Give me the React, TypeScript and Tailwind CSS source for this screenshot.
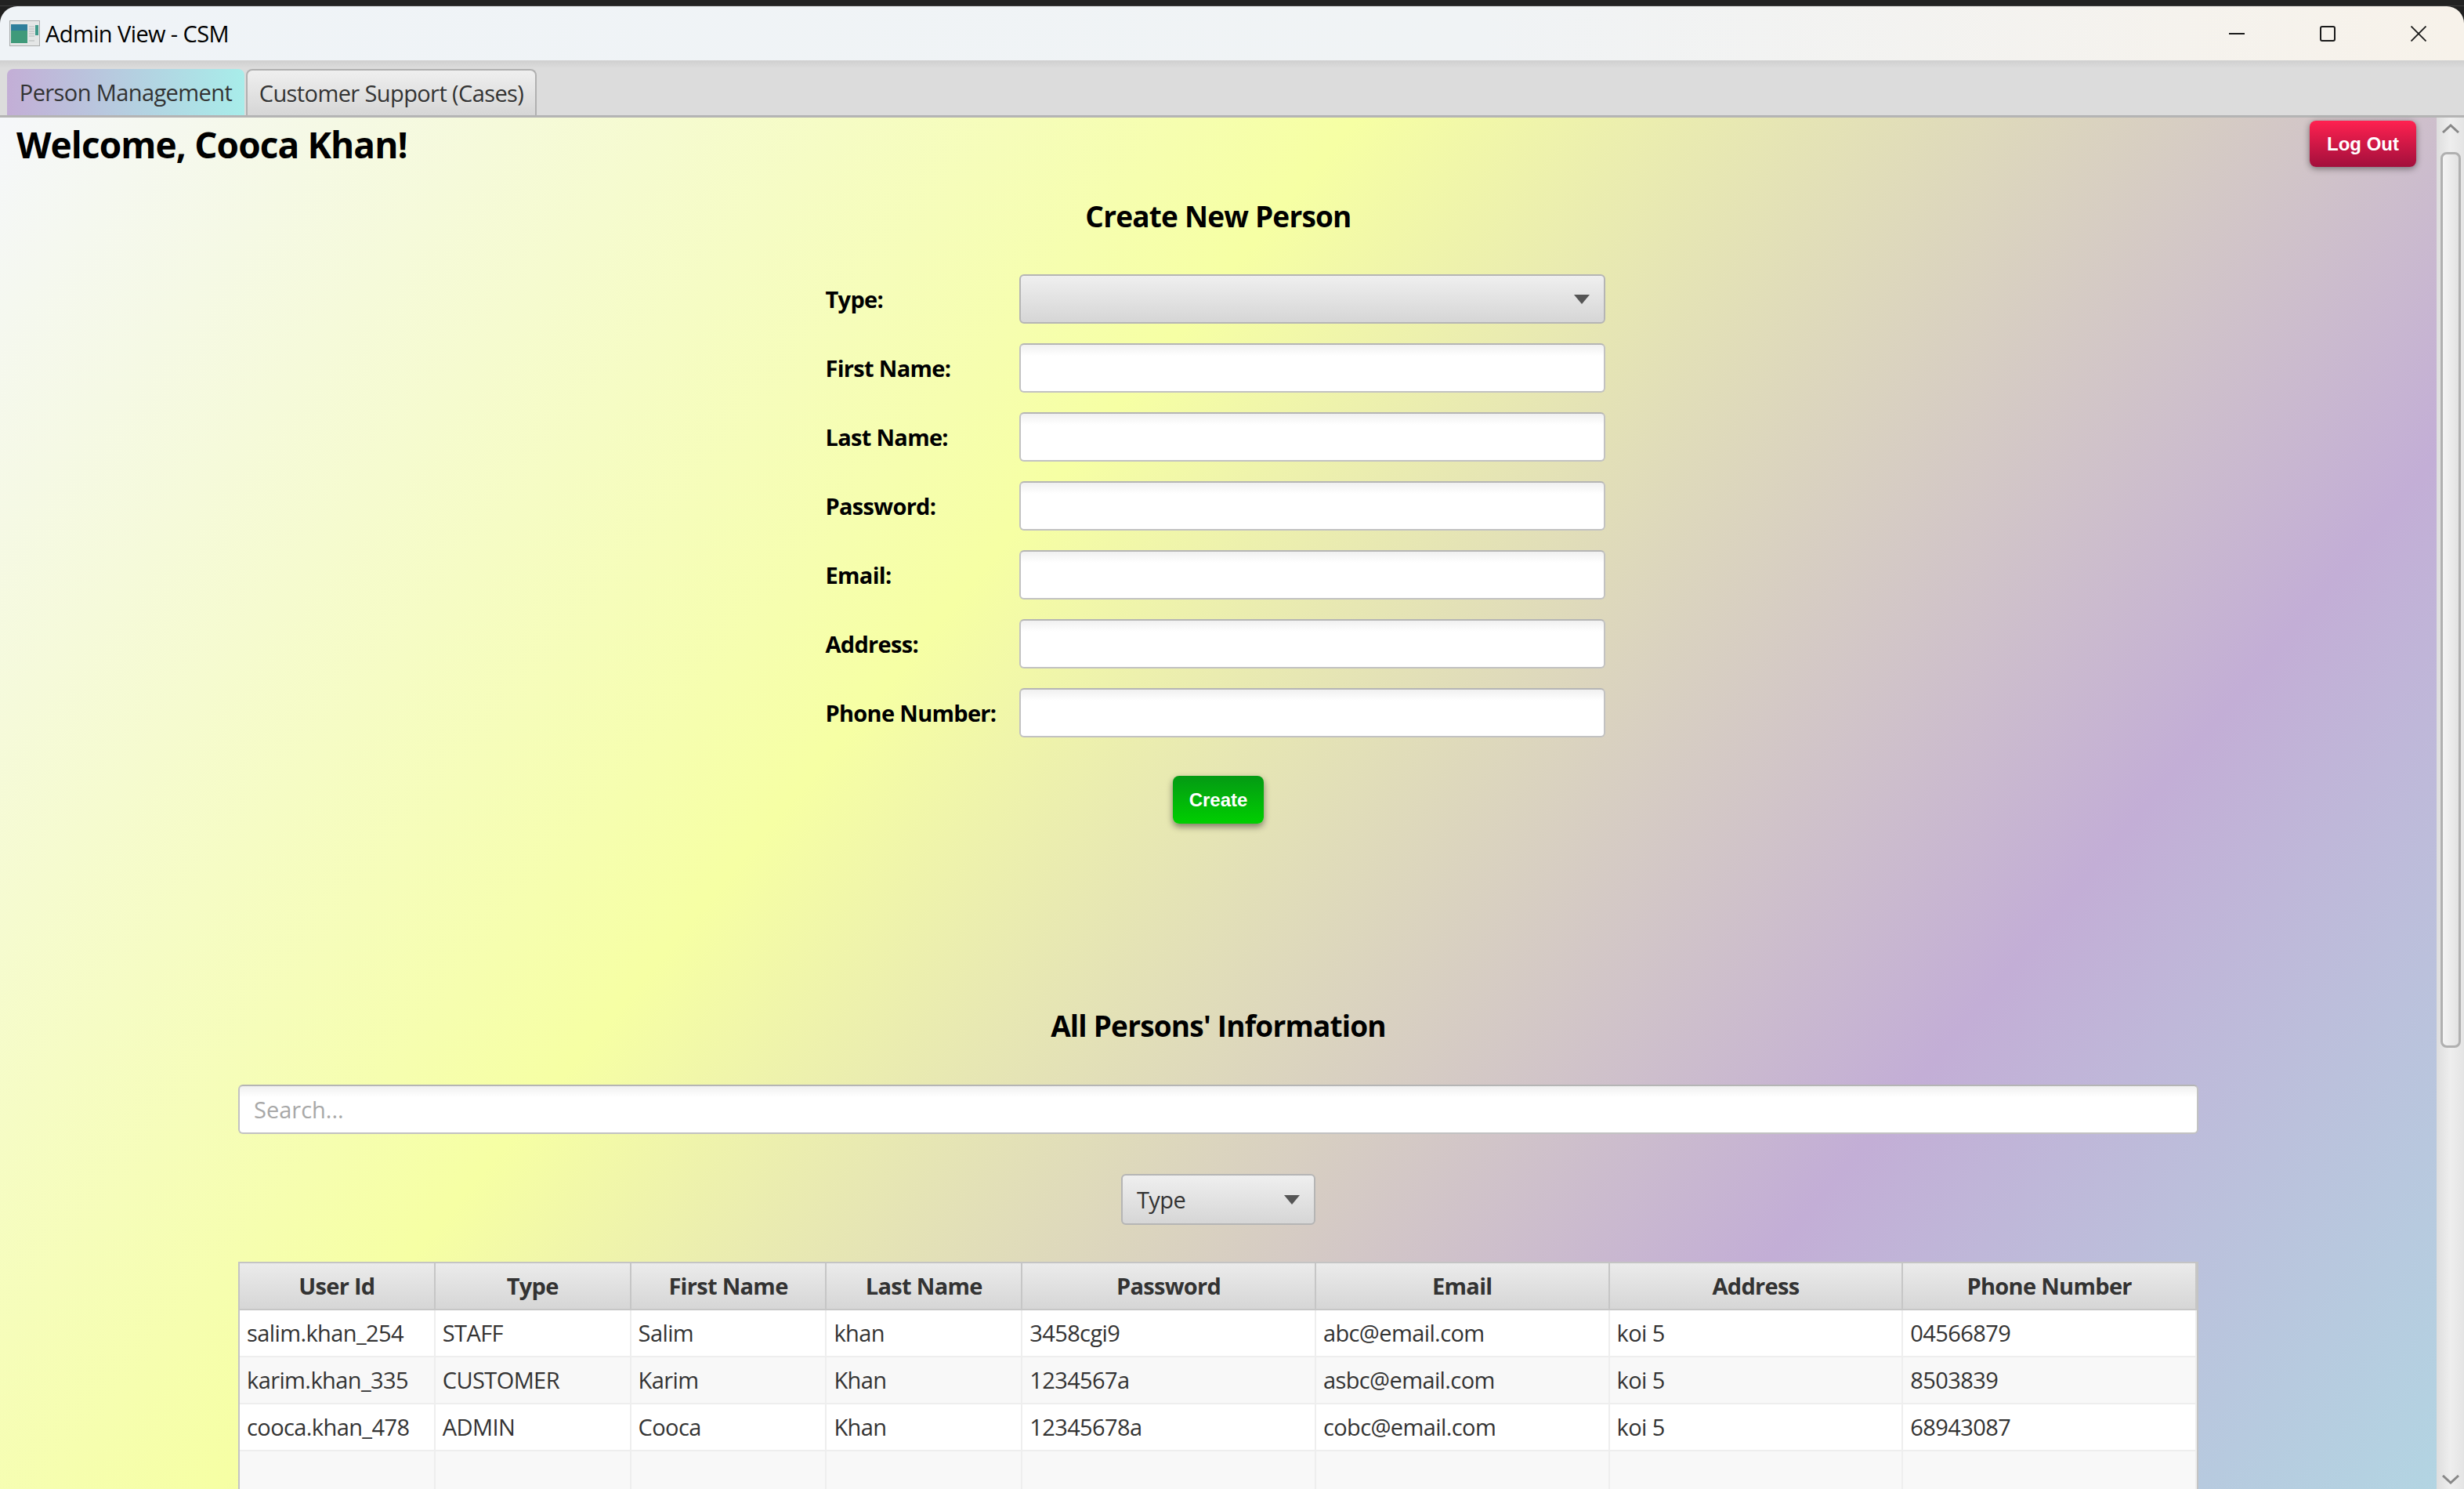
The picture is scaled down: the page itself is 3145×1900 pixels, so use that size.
import React from 'react';

const FORM_LABELS = ['First Name:', 'Last Name:', 'Password:', 'Email:', 'Address:', 'Phone Number:'];

const COLUMNS = [
  { title: 'User Id', w: 'w-[250px]' },
  { title: 'Type', w: 'w-[250px]' },
  { title: 'First Name', w: 'w-[250px]' },
  { title: 'Last Name', w: 'w-[250px]' },
  { title: 'Password', w: 'w-[375px]' },
  { title: 'Email', w: 'w-[375px]' },
  { title: 'Address', w: 'w-[375px]' },
  { title: 'Phone Number', w: 'w-[375px]' },
];

const ROWS = [
  ['salim.khan_254', 'STAFF', 'Salim', 'khan', '3458cgi9', 'abc@email.com', 'koi 5', '04566879'],
  ['karim.khan_335', 'CUSTOMER', 'Karim', 'Khan', '1234567a', 'asbc@email.com', 'koi 5', '8503839'],
  ['cooca.khan_478', 'ADMIN', 'Cooca', 'Khan', '12345678a', 'cobc@email.com', 'koi 5', '68943087'],
  ['', '', '', '', '', '', '', ''],
];

const ComboArrow = () => (
  <svg width="20" height="12" viewBox="0 0 20 12" className="shrink-0">
    <path d="M0 0H20L10 12Z" fill="#555" />
  </svg>
);

const TextField = ({ width, placeholder }: { width: string; placeholder?: string }) => (
  <div className={`${width} h-[63px] flex items-center px-[18px] bg-[linear-gradient(#f0f0f0,#ffffff_14px)] border-2 border-[#c2c2c2] border-t-[#b5b5b5] rounded-[6px] text-[29px] text-[#a8a8a8]`}>
    {placeholder}
  </div>
);

const AppIcon = () => (
  <svg width="39" height="33" viewBox="0 0 39 33" className="shrink-0">
    <rect x="0.5" y="0.5" width="38" height="32" fill="#e4e6e6" stroke="#a9abab" />
    <rect x="2" y="5" width="21" height="24" fill="#3f9a7a" />
    <rect x="2" y="5" width="21" height="8" fill="#2f7f9c" />
    <path d="M25 8h7M25 11h7M25 14h7M25 17h7M25 20h7M25 26h7" stroke="#b4b8b8" strokeWidth="1" />
    <rect x="33" y="6" width="4" height="13" fill="#3f9a8a" />
  </svg>
);

export default function App() {
  return (
    <div className="w-[3145px] h-[1900px] overflow-hidden flex flex-col bg-[#202020] font-['Open_Sans','Noto_Sans',sans-serif]">
      {/* Desktop strip above the window */}
      <div className="h-[8px] shrink-0 bg-[#222222] border-b border-[#3d3d3d]" />

      {/* Title bar */}
      <div className="h-[69px] shrink-0 flex items-center pl-[12px] rounded-t-[22px] bg-[linear-gradient(90deg,#eff3f7,#f0f3f5_60%,#f7f2ea)]">
        <AppIcon />
        <span className="ml-[7px] text-[29px] tracking-[-0.6px] text-black">Admin View - CSM</span>
        <div className="ml-auto flex items-center">
          <div className="w-[116px] flex justify-center">
            <div className="w-[20px] h-[2px] bg-[#1a1a1a]" />
          </div>
          <div className="w-[116px] flex justify-center">
            <div className="w-[20px] h-[20px] border-2 border-[#1a1a1a] rounded-[3px]" />
          </div>
          <div className="w-[116px] flex justify-center">
            <svg width="20" height="20" viewBox="0 0 20 20">
              <path d="M0.5 0.5L19.5 19.5M19.5 0.5L0.5 19.5" stroke="#1a1a1a" strokeWidth="1.8" />
            </svg>
          </div>
        </div>
      </div>

      {/* Tab header */}
      <div className="h-[73px] shrink-0 flex items-end gap-[2px] pl-[9px] bg-[linear-gradient(#cfcfcf,#dcdcdc_10px)] border-b-[3px] border-[#b4b4b4]">
        <div className="h-[59px] w-[303px] flex items-center justify-center rounded-t-[8px] bg-[linear-gradient(90deg,#c3aed6,#a8edea)] text-[29px] tracking-[-0.6px] text-[#333333]">
          Person Management
        </div>
        <div className="h-[59px] w-[371px] flex items-center justify-center rounded-t-[8px] border-2 border-b-0 border-[#b0b0b0] bg-[linear-gradient(#efefef,#d6d6d6)] text-[29px] tracking-[-0.6px] text-[#333333]">
          Customer Support (Cases)
        </div>
      </div>

      {/* Scroll pane */}
      <div className="flex-1 min-h-0 flex bg-[#e8e8e8]">
        <div className="w-[3110px] shrink-0 h-[2580px] flex flex-col items-center bg-[linear-gradient(129.7deg,#f5f7fa_0%,#f6ffa4_33%,#c3aed6_66%,#a8edea_100%)]">
          <div className="w-full flex items-start justify-between pl-[21px] pr-[26px] pt-[4px]">
            <h1 className="text-[46px] leading-[60px] font-bold tracking-[-0.9px] text-black">Welcome, Cooca Khan!</h1>
            <button className="w-[136px] h-[59px] rounded-[8px] bg-[linear-gradient(#ff2150,#a20f3c)] text-white font-['Liberation_Sans',sans-serif] font-bold text-[24px] shadow-[0_2px_8px_rgba(0,0,0,0.45)]">
              Log Out
            </button>
          </div>

          <h2 className="mt-[37px] text-[37px] leading-[50px] font-bold tracking-[-0.8px] text-black">Create New Person</h2>

          {/* Form */}
          <div className="mt-[49px] w-[1000px] ml-[-3px] flex flex-col gap-[25px]">
            <div className="flex items-center">
              <span className="w-[247px] text-[29px] font-bold tracking-[-0.7px] text-black">Type:</span>
              <div className="w-[748px] h-[63px] flex items-center justify-end pr-[18px] rounded-[6px] border-2 border-[#b5b5b5] bg-[linear-gradient(#efefef,#d6d6d6)]">
                <ComboArrow />
              </div>
            </div>
            {FORM_LABELS.map((label) => (
              <div key={label} className="flex items-center">
                <span className="w-[247px] text-[29px] font-bold tracking-[-0.7px] text-black">{label}</span>
                <TextField width="w-[748px]" />
              </div>
            ))}
          </div>

          <button className="mt-[49px] w-[116px] h-[61px] rounded-[8px] bg-[linear-gradient(#049a14,#00cf00)] text-white font-['Liberation_Sans',sans-serif] font-bold text-[24px] shadow-[0_4px_8px_rgba(0,0,0,0.45)]">
            Create
          </button>

          <h2 className="mt-[233px] text-[37px] leading-[50px] font-bold tracking-[-0.8px] text-black">All Persons' Information</h2>

          {/* Table section */}
          <div className="mt-[50px] w-[2502px]">
            <TextField width="w-full" placeholder="Search..." />
          </div>

          <div className="mt-[51px] w-[248px] h-[65px] flex items-center justify-between px-[18px] rounded-[6px] border-2 border-[#b5b5b5] bg-[linear-gradient(#efefef,#d6d6d6)] text-[29px] tracking-[-0.6px] text-[#333333]">
            Type
            <ComboArrow />
          </div>

          <div className="mt-[47px] w-[2502px] border-2 border-[#c4c4c4] bg-white">
            <div className="flex h-[60px] border-b-2 border-[#c6c6c6]">
              {COLUMNS.map((col) => (
                <div key={col.title} className={`${col.w} flex items-center justify-center border-r-2 border-[#c6c6c6] bg-[linear-gradient(#ebebeb,#d6d6d6)] text-[29px] font-bold tracking-[-0.7px] text-[#333333]`}>
                  {col.title}
                </div>
              ))}
            </div>
            {ROWS.map((row, i) => (
              <div key={i} className={`flex h-[60px] border-b-2 border-[#eeeeee] ${i % 2 === 0 ? 'bg-white' : 'bg-[#f8f8f8]'}`}>
                {row.map((cell, j) => (
                  <div key={j} className={`${COLUMNS[j].w} flex items-center pl-[9px] border-r-2 border-[#eeeeee] text-[29px] tracking-[-0.6px] text-[#333333]`}>
                    {cell}
                  </div>
                ))}
              </div>
            ))}
          </div>
        </div>

        {/* Scrollbar */}
        <div className="w-[35px] shrink-0 h-full flex flex-col items-center bg-[linear-gradient(90deg,#dedede,#eeeeee_50%,#e4e4e4)]">
          <svg width="22" height="12" viewBox="0 0 22 12" className="mt-[8px] shrink-0">
            <path d="M1 11L11 2L21 11" fill="none" stroke="#888" strokeWidth="3" />
          </svg>
          <div className="mt-[24px] w-[26px] h-[1143px] rounded-[8px] border-[3px] border-[#b0b0b0] bg-[linear-gradient(90deg,#f4f4f4,#e2e2e2)]" />
          <svg width="22" height="12" viewBox="0 0 22 12" className="mt-auto mb-[6px] shrink-0">
            <path d="M1 1L11 10L21 1" fill="none" stroke="#888" strokeWidth="3" />
          </svg>
        </div>
      </div>
    </div>
  );
}
